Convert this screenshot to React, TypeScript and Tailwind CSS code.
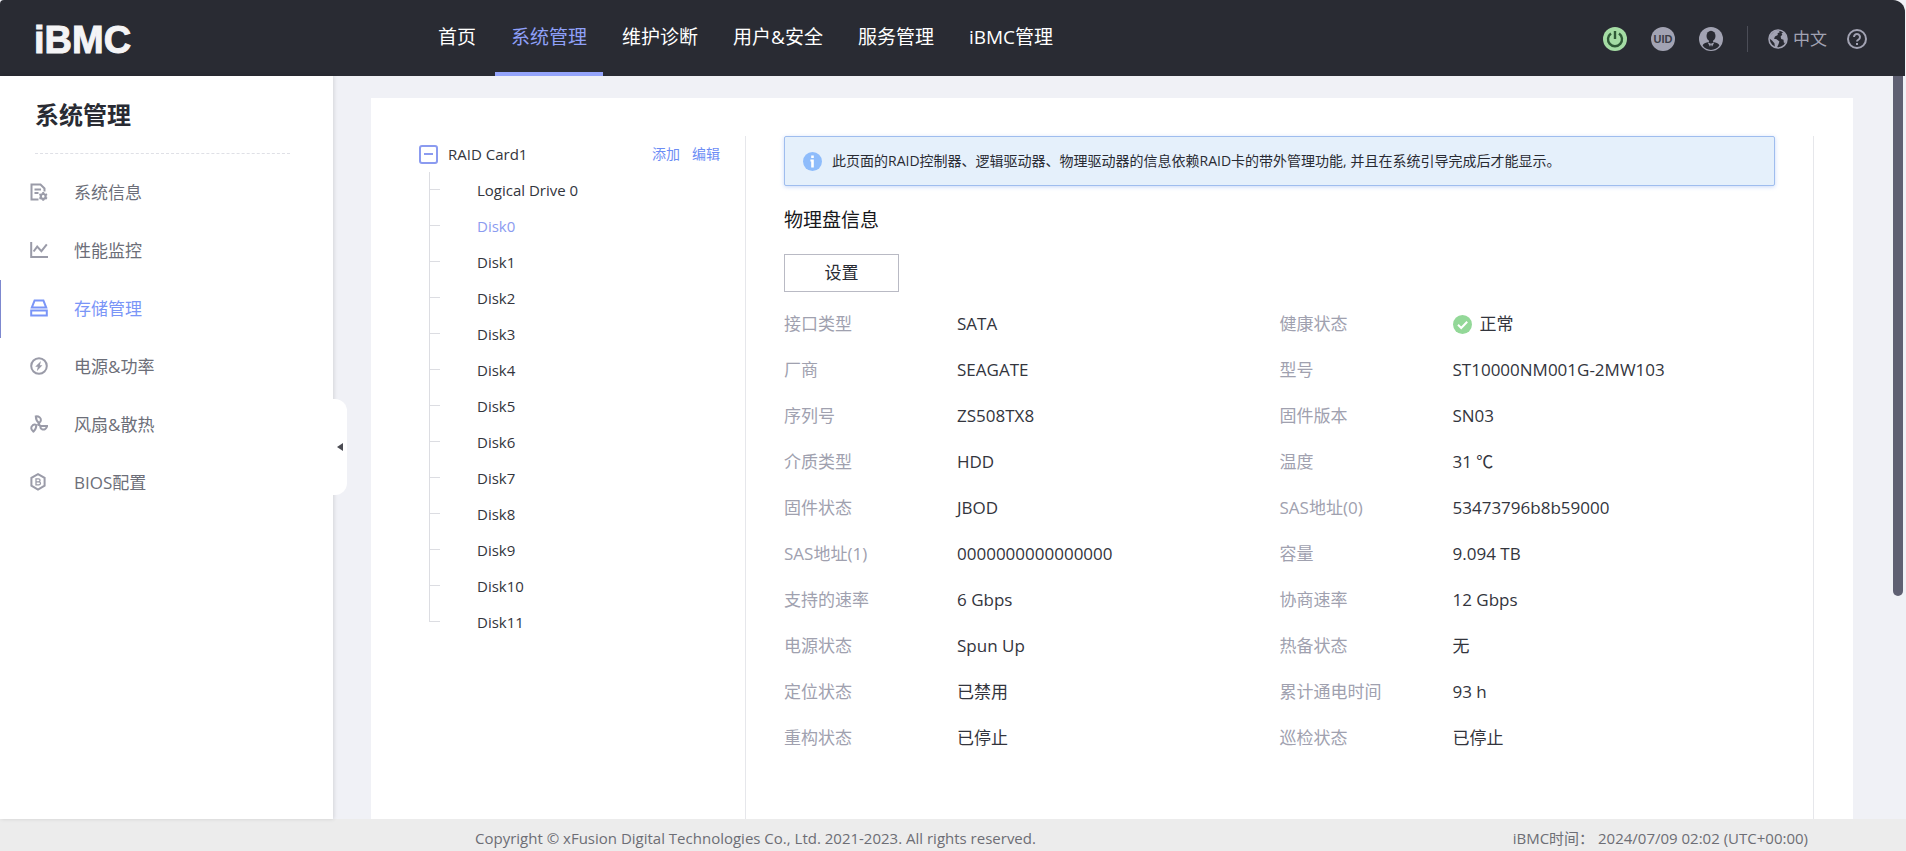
import type { ReactNode } from "react";
import clsx from "clsx";

const navItems = ["首页", "系统管理", "维护诊断", "用户&安全", "服务管理", "iBMC管理"];

const disks = ["Logical Drive 0", ...Array.from({ length: 12 }, (_, i) => `Disk${i}`)];

const details: [string, string][] = [
    ["接口类型", "SATA"],
    ["健康状态", "正常"],
    ["厂商", "SEAGATE"],
    ["型号", "ST10000NM001G-2MW103"],
    ["序列号", "ZS508TX8"],
    ["固件版本", "SN03"],
    ["介质类型", "HDD"],
    ["温度", "31 ℃"],
    ["固件状态", "JBOD"],
    ["SAS地址(0)", "53473796b8b59000"],
    ["SAS地址(1)", "0000000000000000"],
    ["容量", "9.094 TB"],
    ["支持的速率", "6 Gbps"],
    ["协商速率", "12 Gbps"],
    ["电源状态", "Spun Up"],
    ["热备状态", "无"],
    ["定位状态", "已禁用"],
    ["累计通电时间", "93 h"],
    ["重构状态", "已停止"],
    ["巡检状态", "已停止"],
];

function MenuIcon({ children }: { children: ReactNode }) {
    return (
        <svg className="h-[18px] w-[18px] shrink-0" viewBox="0 0 18 18" fill="none" stroke="currentColor" strokeWidth={2}>
            {children}
        </svg>
    );
}

const menuItems: { label: string; icon: ReactNode }[] = [
    {
        label: "系统信息",
        icon: (
            <MenuIcon>
                <path d="M8.5 16.5H1.5v-15h9l4 4v3" />
                <path d="M4.5 6.5H11M4.5 10h4" strokeWidth={1.8} />
                <circle cx="13.2" cy="13.4" r="2.4" strokeWidth={2.2} />
                <path d="M13.2 9v1.6M13.2 16.2v1.6M9.4 11.2l1.4.8M15.6 14.8l1.4.8M9.4 15.6l1.4-.8M15.6 12l1.4-.8" />
            </MenuIcon>
        ),
    },
    {
        label: "性能监控",
        icon: (
            <MenuIcon>
                <path d="M1.2 1v15H18" />
                <path d="M3.6 10.5 7.2 5.6l4.2 4.6 5.4-6.8" />
            </MenuIcon>
        ),
    },
    {
        label: "存储管理",
        icon: (
            <MenuIcon>
                <path d="M4.6 1.4h8.8l2.8 7.2H1.8z" />
                <path d="M1.2 11.6h15.6v4.8H1.2z" />
            </MenuIcon>
        ),
    },
    {
        label: "电源&功率",
        icon: (
            <MenuIcon>
                <circle cx="9" cy="9" r="7.8" />
                <path d="M11 4 5.2 9.7h2.6l-1 4.5 5.6-5.9H9.9z" fill="currentColor" stroke="none" />
            </MenuIcon>
        ),
    },
    {
        label: "风扇&散热",
        icon: (
            <MenuIcon>
                <path d="M5.8 1.4c3-.3 5.3 1.2 5.1 3.7-.1 1.4-.9 2.4-1.8 2.9C7 6.6 5.9 4.2 5.8 1.4z" />
                <path d="M17.2 11c-.8 3-3 4-5.2 3.2-1.2-.5-1.8-1.7-1.9-3.2z" />
                <path d="M3.4 16.6C.6 14.6.6 11.8 2.8 10.2c1.2-.8 2.5-.7 3.5-.1.1 2.6-.8 4.8-2.9 6.5z" />
                <circle cx="8.8" cy="9.4" r="1.6" fill="currentColor" stroke="none" />
            </MenuIcon>
        ),
    },
    {
        label: "BIOS配置",
        icon: (
            <MenuIcon>
                <path d="M8 1.2 14.6 4.9v7.8L8 16.6 1.4 12.7V4.9z" />
                <path d="M6 5.9h2.6a1.4 1.4 0 0 1 0 2.9H6zM6 8.8h3a1.5 1.5 0 0 1 0 3H6z" strokeWidth={1.3} />
            </MenuIcon>
        ),
    },
];

function PowerIcon() {
    return (
        <svg className="h-6 w-6" viewBox="0 0 24 24" fill="none">
            <circle cx="12" cy="12" r="12" fill="#a4dca4" />
            <path d="M8 6.5a7 7 0 1 0 8 0" stroke="#2f5a37" strokeWidth={2.4} />
            <path d="M12 4v8" stroke="#2f5a37" strokeWidth={2.4} />
        </svg>
    );
}

function UserIcon() {
    return (
        <svg className="h-6 w-6" viewBox="0 0 24 24">
            <circle cx="12" cy="12" r="12" fill="#a2a3b3" />
            <ellipse cx="12" cy="9" rx="4.5" ry="5.2" fill="#292b33" />
            <path
                d="M10 12.5v2.2l-3.8 1.3C4.8 16.5 4 17.3 3.6 18.6 5.6 21.5 8.7 23 12 23s6.4-1.5 8.4-4.4c-.4-1.3-1.2-2.1-2.6-2.6L14 14.7v-2.2z"
                fill="#292b33"
            />
            <path d="m8.6 15.2 2.4 4.6 1-2.6 1 2.6 2.4-4.6-3.4 1.6z" fill="#a2a3b3" />
        </svg>
    );
}

function GlobeIcon() {
    return (
        <svg className="h-5 w-5" viewBox="0 0 20 20">
            <circle cx="10" cy="10" r="9" fill="none" stroke="#a2a3b3" strokeWidth={1.6} />
            <path
                d="M2 6.5 6.5 2l4.3-.6 1 1.8-2.2 1 .2 1.8L7 7.6 6 9.8l2.6.4 2.8 2.2-.8 2.6-1.6 3.6-2-.4-.6-4L4 11.5 1.4 9.6z"
                fill="#a2a3b3"
            />
            <path d="m13.5 4.2 2.5-.7 2.6 4.3.4 3-1.8 3.4-1.4-.6-.3-2.8-2.3-.8-.6-2.6 1.7-1.6z" fill="#a2a3b3" />
        </svg>
    );
}

function HelpIcon() {
    return (
        <svg className="h-5 w-5" viewBox="0 0 20 20" fill="none" stroke="#a2a3b3" strokeWidth={2}>
            <circle cx="10" cy="10" r="9" />
            <path d="M7 8a3 3 0 1 1 4.6 2.5c-1 .6-1.6 1.100-1.600 2.100M10 14v2" />
        </svg>
    );
}

function Header() {
    return (
        <header className="mr-px flex h-[76px] shrink-0 rounded-tl rounded-tr-xl bg-[#292b33]">
            <a
                href="#"
                className="flex w-[422px] items-center pt-[3px] pl-[34px] font-['Liberation_Sans',sans-serif] text-[38px] leading-none font-bold text-[#f4f4f6] [-webkit-text-stroke:1px_#f4f4f6]"
            >
                iBMC
            </a>
            <nav className="flex gap-[3px] text-[19px] text-white">
                {navItems.map((item) => (
                    <a
                        key={item}
                        href="#"
                        className={clsx(
                            "flex items-center border-b-4 px-4 pt-[2px] whitespace-nowrap",
                            item === "系统管理" ? "border-[#94a4fb] text-[#8fa0f8]" : "border-transparent"
                        )}
                    >
                        {item}
                    </a>
                ))}
            </nav>
            <div className="ml-auto flex items-center gap-6 pt-[2px] pr-[38px]">
                <button aria-label="电源">
                    <PowerIcon />
                </button>
                <button className="flex h-6 w-6 items-center justify-center rounded-full bg-[#a2a3b3] font-['Liberation_Sans',sans-serif] text-[11px] font-bold text-[#3b3d47]">
                    UID
                </button>
                <button aria-label="用户">
                    <UserIcon />
                </button>
                <div className="h-[26px] w-px bg-[#4b4d57]" />
                <div className="-ml-1 flex items-center gap-5">
                    <button className="flex items-center gap-[5px] text-[17px] text-[#a2a3b3]">
                        <GlobeIcon />
                        中文
                    </button>
                    <button aria-label="帮助">
                        <HelpIcon />
                    </button>
                </div>
            </div>
        </header>
    );
}

function Sidebar() {
    return (
        <aside className="relative z-10 w-[333px] shrink-0 bg-white shadow-[1px_0_4px_rgba(0,0,0,0.12)]">
            <h1 className="mr-[43px] ml-[35px] flex h-[78px] items-center border-b border-dashed border-[#dfe0e6] text-2xl font-bold text-[#292b33]">
                系统管理
            </h1>
            <ul className="mt-[10px] text-[17px] text-[#6c6e78]">
                {menuItems.map(({ label, icon }) => {
                    const active = label === "存储管理";
                    return (
                        <li key={label}>
                            <a
                                href="#"
                                className={clsx(
                                    "flex h-[58px] items-center gap-[26px] border-l pl-[29px]",
                                    active ? "border-[#7d88cf] text-[#7a95f7]" : "border-transparent"
                                )}
                            >
                                <span className={clsx("pb-[3px]", active ? "text-[#7a95f7]" : "text-[#9a9ba8]")}>
                                    {icon}
                                </span>
                                {label}
                            </a>
                        </li>
                    );
                })}
            </ul>
            {/* Collapse handle */}
            <button
                aria-label="收起"
                className="absolute top-[323px] left-full flex h-24 w-[14px] items-center justify-center rounded-r-xl bg-white"
            >
                <svg className="h-2 w-[6px]" viewBox="0 0 6 8" fill="#4a4b52">
                    <path d="M6 0v8L0 4z" />
                </svg>
            </button>
        </aside>
    );
}

function DiskTree() {
    return (
        <div className="w-[374px] shrink-0 pr-[25px] pl-12 text-[15px] text-[#33353d]">
            <div className="flex h-9 items-center">
                <button
                    aria-label="折叠"
                    className="flex h-[19px] w-[19px] items-center justify-center rounded-[3px] border-2 border-[#8b9bf0]"
                >
                    <span className="h-[2px] w-[9px] bg-[#8b9bf0]" />
                </button>
                <span className="ml-[10px]">RAID Card1</span>
                <div className="ml-auto flex gap-3 text-sm text-[#6d8df5]">
                    <button>添加</button>
                    <button>编辑</button>
                </div>
            </div>
            <ul className="ml-[10px]">
                {disks.map((disk, i) => (
                    <li key={disk} className="flex h-9">
                        <div className="mr-[37px] flex w-[11px] flex-col">
                            <div className="h-[18px] border-b border-l border-[#dcdde2]" />
                            {i < disks.length - 1 && <div className="h-[18px] border-l border-[#dcdde2]" />}
                        </div>
                        <button className={clsx("self-center", disk === "Disk0" && "text-[#8b9bf0]")}>{disk}</button>
                    </li>
                ))}
            </ul>
        </div>
    );
}

function DiskInfo() {
    return (
        <div className="flex-1 border-x border-[#e6e7eb] px-[38px]">
            <div className="flex h-[50px] items-center gap-[10px] rounded-xs border border-[#9fbdee] bg-[#e5f0fb] pl-[18px] text-sm text-[#292b33] shadow-[0_1px_4px_rgba(120,160,240,0.4)]">
                <svg className="h-[19px] w-[19px] shrink-0" viewBox="0 0 19 19">
                    <circle cx="9.5" cy="9.5" r="9.5" fill="#8ebcfb" />
                    <path d="M8.2 3.5h2.6v2.6H8.2zM7.4 7.6h3.4v7.9H8.2V9.400h-.8z" fill="#fff" />
                </svg>
                此页面的RAID控制器、逻辑驱动器、物理驱动器的信息依赖RAID卡的带外管理功能, 并且在系统引导完成后才能显示。
            </div>
            <h2 className="mt-5 text-[19px] leading-7 text-[#17181c]">物理盘信息</h2>
            <button className="mt-5 h-[38px] w-[115px] border border-[#b9bac4] bg-white text-[17px] text-[#292b33]">
                设置
            </button>
            <dl className="mt-[9px] grid grid-cols-2 text-[17px]">
                {details.map(([label, value]) => (
                    <div key={label} className="flex h-[46px] items-center">
                        <dt className="w-[173px] text-[#a0a1af]">{label}</dt>
                        <dd className="flex items-center gap-2 text-[#33353d]">
                            {label === "健康状态" && (
                                <svg className="h-[19px] w-[19px]" viewBox="0 0 19 19" fill="none">
                                    <circle cx="9.5" cy="9.5" r="9.5" fill="#93d898" />
                                    <path d="m5 9.8 3.2 3.2 6-6.2" stroke="#fff" strokeWidth={2} />
                                </svg>
                            )}
                            {value}
                        </dd>
                    </div>
                ))}
            </dl>
        </div>
    );
}

export default function App() {
    return (
        <div className="flex h-screen flex-col overflow-hidden bg-[#f0f1f6] font-['Open_Sans','Noto_Sans_CJK_SC',sans-serif]">
            <Header />
            <div className="flex min-h-0 flex-1">
                <Sidebar />
                <main className="flex min-w-0 flex-1 overflow-hidden pt-[22px] pr-10 pl-[38px]">
                    <div className="flex flex-1 bg-white pt-[38px] pr-[39px]">
                        <DiskTree />
                        <DiskInfo />
                    </div>
                </main>
                {/* Scrollbar */}
                <div className="mr-[3px] w-[10px]">
                    <div className="h-[70%] rounded-b-full bg-[#5f6072]" />
                </div>
            </div>
            <footer className="flex h-8 shrink-0 items-center justify-between bg-[#ececec] pt-[6px] pr-[98px] pl-[475px] text-[15px] text-[#6d6e75]">
                <span>Copyright © xFusion Digital Technologies Co., Ltd. 2021-2023. All rights reserved.</span>
                <span>iBMC时间： 2024/07/09 02:02 (UTC+00:00)</span>
            </footer>
        </div>
    );
}
